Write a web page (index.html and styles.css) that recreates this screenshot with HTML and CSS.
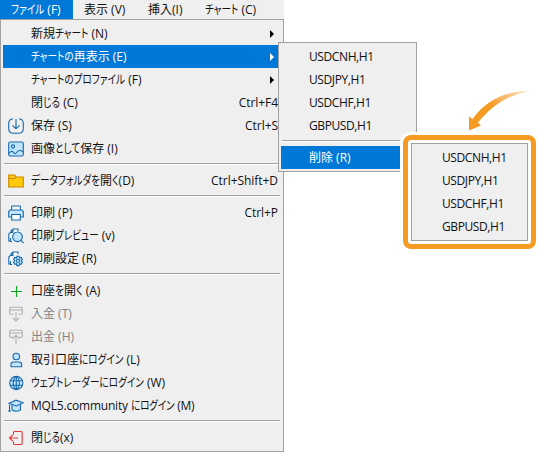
FILE: index.html
```
<!DOCTYPE html>
<html lang="ja">
<head>
<meta charset="utf-8">
<title>ファイル</title>
<link rel="stylesheet" href="styles.css">
</head>
<body>
<nav class="menubar">
  <div class="tab active"><span>ファイル (F)</span></div><div class="tab"><span>表示 (V)</span></div><div class="tab"><span>挿入(I)</span></div><div class="tab"><span>チャート (C)</span></div>
</nav>
<div class="menu main">
  <div class="row"><i></i><span>新規チャート (N)</span><b class="arrow"></b></div>
  <div class="row selected"><i></i><span>チャートの再表示 (E)</span><b class="arrow"></b></div>
  <div class="row"><i></i><span>チャートのプロファイル (F)</span><b class="arrow"></b></div>
  <div class="row"><i></i><span>閉じる (C)</span><kbd>Ctrl+F4</kbd></div>
  <div class="row"><i><svg class="blue" viewBox="0 0 16 16"><path fill="none" d="M5 .8C2 1.1.7 2.3.7 5.500v5c0 3.500 1.300 4.800 4.800 4.800h5c3.500 0 4.800-1.300 4.800-4.800v-5c0-3.200-1.300-4.400-4.300-4.700M8 1v9.500M4.500 7.300 8 10.800l3.500-3.500"/></svg></i><span>保存 (S)</span><kbd>Ctrl+S</kbd></div>
  <div class="row"><i><svg class="blue" viewBox="0 0 16 16"><rect x=".7" y="1" width="14.600" height="14" rx="1.500"/><circle cx="5" cy="5.500" r="1.600"/><path fill="none" d="M1 12.500c1.500-2 3-3 4.500-1s2.500 1 4-.8 3-2 5.500.3"/></svg></i><span>画像として保存 (I)</span></div>
  <hr>
  <div class="row"><i><svg class="folder" viewBox="0 0 16 16"><path d="M.7 2h6l1.500 2h7.100v10H.7zM.7 5.500h5.500L8.200 4"/></svg></i><span>データフォルダを開く(D)</span><kbd>Ctrl+Shift+D</kbd></div>
  <hr>
  <div class="row"><i><svg class="blue" viewBox="0 0 16 16"><path class="paper" d="M3.700 5V1h8.600v4"/><path d="M3.500 12H.7V6.500L2 5h12l1.300 1.500V12h-2.800"/><path class="paper" d="M3.700 9.500h8.600V15H3.700z"/></svg></i><span>印刷 (P)</span><kbd>Ctrl+P</kbd></div>
  <div class="row"><i><svg class="blue" viewBox="0 0 16 16"><path class="paper" d="M3 4.500V3l2-2h5v2M5 1v3H2.500M2 13H.8V6l1.500-1.500h3M4 13.500H2.500V10"/><circle cx="9.500" cy="8.800" r="4.800"/><path d="m13 12.300 2.600 2.900"/></svg></i><span>印刷プレビュー (v)</span></div>
  <div class="row"><i><svg class="blue" viewBox="0 0 16 16"><path class="paper" d="M3 4.500V3l2-2h5v2M5 1v3H2.500M2 13H.8V6l1.500-1.500h3M4 13.500H2.500V10"/><path d="m8.900 5.300 2.200 0 .4 1.700 1.700-.5 1.200 2-1.200 1.300 1.200 1.500-1.200 2-1.700-.5-.4 1.800H8.900l-.4-1.800-1.700.5-1.200-2 1.200-1.500-1.200-1.300 1.200-2 1.700.5z"/><circle class="paper" cx="10" cy="9.900" r="1.500"/></svg></i><span>印刷設定 (R)</span></div>
  <hr>
  <div class="row"><i><svg class="green" viewBox="0 0 16 16"><path d="M8.500 3v11M3 8.500h11"/></svg></i><span>口座を開く (A)</span></div>
  <div class="row disabled"><i><svg class="gray" viewBox="0 0 16 16"><path d="M5.500 8.300H2.500L1.700 7.500V2l.8-.8h11l.8.8v5.500l-.8.800h-3M1.700 4h12.600M8 6v9M4.700 11.800 8 15l3.300-3.200"/></svg></i><span>入金 (T)</span></div>
  <div class="row disabled"><i><svg class="gray" viewBox="0 0 16 16"><path d="M5 8.300H2.500L1.700 7.500V2l.8-.8h11l.8.8v5.500l-.8.800H11M1.700 4h12.600M8 15.500V6.300M4.700 9.500 8 6.300l3.300 3.200"/></svg></i><span>出金 (H)</span></div>
  <div class="row"><i><svg class="blue" viewBox="0 0 16 16"><circle cx="8.300" cy="4.500" r="3.300"/><path d="M3 14.700v-2.400q0-2.300 2.500-2.300h5.600q2.500 0 2.500 2.300v2.400z"/></svg></i><span>取引口座にログイン (L)</span></div>
  <div class="row"><i><svg class="blue" viewBox="0 0 16 16"><circle cx="8.300" cy="8" r="6.600"/><path fill="none" d="M8.300 1.400v13.200M2.100 5.700h12.400M2.100 10.300h12.400M8.300 1.400C4.300 4 4.300 12 8.300 14.600M8.300 1.400c4 2.600 4 10.600 0 13.200"/></svg></i><span>ウェブトレーダーにログイン (W)</span></div>
  <div class="row"><i><svg class="blue" viewBox="0 0 16 16"><path d="M4 6v6q4 2.500 8.500 0V6"/><path d="M.7 5.500 8 2.200l7.300 2.600L8.500 8zM1.500 5.700V13M.7 13.700l.8-2 .8 2"/></svg></i><span class="tight">MQL5.community にログイン (M)</span></div>
  <hr>
  <div class="row"><i><svg class="red" viewBox="0 0 16 16"><path d="M5.500 4.500V2.700q0-1.200 1.200-1.200h6q1.500 0 1.500 1.500v10q0 1.500-1.500 1.500h-6q-1.200 0-1.200-1.200v-1.800M1.500 8h8.500M4.800 4.800 1.500 8l3.300 3.200"/></svg></i><span>閉じる(x)</span></div>
</div>
<div class="menu sub">
  <div class="row"><span class="symbol">USDCNH,H1</span></div>
  <div class="row"><span class="symbol">USDJPY,H1</span></div>
  <div class="row"><span class="symbol">USDCHF,H1</span></div>
  <div class="row"><span class="symbol">GBPUSD,H1</span></div>
  <hr>
  <div class="row selected"><span>削除 (R)</span></div>
</div>
<div class="callout">
  <div class="menu">
    <div class="row"><span class="symbol">USDCNH,H1</span></div>
    <div class="row"><span class="symbol">USDJPY,H1</span></div>
    <div class="row"><span class="symbol">USDCHF,H1</span></div>
    <div class="row"><span class="symbol">GBPUSD,H1</span></div>
  </div>
</div>
<svg class="pointer" viewBox="0 0 62 42"><defs><linearGradient id="fade" x1="0" y1="1" x2="1" y2="0"><stop offset=".5" stop-color="#f59a23"/><stop offset="1" stop-color="#f59a23" stop-opacity=".25"/></linearGradient></defs><path fill="url(#fade)" d="M1 40.500V26.500l3.500 2.500C18 10 37 1 61 1 38 6 24 16 10 32.500l3 3z"/></svg>
<script src="kana.js"></script>
</body>
</html>
```
FILE: kana.js
```
// Condense runs of kana in the labels, leaving kanji at full width.
const SCALE = 0.8;
document.querySelectorAll('.tab span, .row span').forEach(label => {
  const parts = label.textContent.split(/([\u3040-\u30ff]+)/);
  if (parts.length < 2) return;
  label.textContent = '';
  parts.forEach((part, n) => {
    if (n % 2 === 0) {
      label.append(part);
      return;
    }
    const run = document.createElement('span');
    run.className = 'kana';
    run.textContent = part;
    label.append(run);
    run.style.marginRight = -run.getBoundingClientRect().width * (1 - SCALE) + 'px';
  });
});
document.body.classList.add('condensed');
```
FILE: styles.css
```
* { box-sizing: border-box; }
body {
  margin: 0;
  width: 539px;
  height: 452px;
  overflow: hidden;
  position: relative;
  background: #fff;
  color: #111;
  font: 12px/23px "Open Sans", "Noto Sans CJK JP", sans-serif;
  font-feature-settings: "palt";
  white-space: nowrap;
}
.menubar { display: flex; width: 284px; height: 19px; background: #efefef; line-height: 19px; }
.tab { padding-left: 11px; width: 73px; }
.tab:nth-child(2) { width: 64px; }
.tab:nth-child(3) { width: 57px; }
.tab span, .row span { white-space: pre; }
.active, .selected { background: #0078d7; color: #fff; }
.kana { display: inline-block; transform-origin: left; }
.condensed .kana { transform: scaleX(.8); }
.tight { letter-spacing: -.2px; }
.symbol { letter-spacing: -.4px; }
.menu { border: 1px solid #a0a0a0; background: #efefef; padding: 2px; }
.main { width: 284px; height: 433px; }
.row { display: flex; height: 23px; align-items: center; }
.row i { width: 28px; padding-left: 5px; display: flex; flex: none; }
.row svg { width: 16px; height: 16px; stroke-width: 1.1; }
kbd { font: inherit; margin-left: auto; padding-right: 3px; letter-spacing: -.05px; }
hr { margin: 3px 1px 4px; border: 0; border-top: 1px solid #a0a0a0; border-bottom: 1px solid #fff; height: 2px; }
.arrow { margin: 0 7px 0 auto; border: 4px solid transparent; border-left-color: #000; border-right: 0; }
.selected .arrow { border-left-color: #fff; }
.disabled { color: #838383; }
.blue { fill: #bfe4fc; stroke: #1769aa; }
.paper { fill: #fff; }
.folder { fill: #ffc80a; stroke: #c98a00; }
.green { fill: none; stroke: #09a51d; }
.gray { fill: none; stroke: #b2b2b2; }
.red { fill: none; stroke: #e03434; }
.sub { position: absolute; left: 278px; top: 42px; width: 139px; height: 130px; }
.sub .row { padding-left: 28px; }
.callout {
  position: absolute; left: 403px; top: 135px; width: 133px; height: 114px;
  border: 5px solid #f59a23; border-radius: 8px; padding: 3px; background: #fff;
  box-shadow: 0 0 0 3px #fff;
}
.callout .row { padding-left: 28px; }
.pointer { position: absolute; left: 468px; top: 90px; width: 62px; height: 42px; }
```
